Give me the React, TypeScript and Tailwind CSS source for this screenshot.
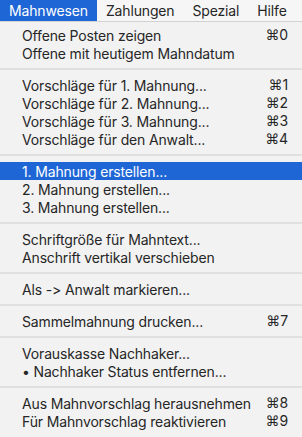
import React from 'react';

type Item = { label: string; shortcut?: string; active?: boolean } | 'sep';

const MENU_TITLES = ['Mahnwesen', 'Zahlungen', 'Spezial', 'Hilfe'];

const ITEMS: Item[] = [
  { label: 'Offene Posten zeigen', shortcut: '0' },
  { label: 'Offene mit heutigem Mahndatum' },
  'sep',
  { label: 'Vorschläge für 1. Mahnung...', shortcut: '1' },
  { label: 'Vorschläge für 2. Mahnung...', shortcut: '2' },
  { label: 'Vorschläge für 3. Mahnung...', shortcut: '3' },
  { label: 'Vorschläge für den Anwalt...', shortcut: '4' },
  'sep',
  { label: '1. Mahnung erstellen...', active: true },
  { label: '2. Mahnung erstellen...' },
  { label: '3. Mahnung erstellen...' },
  'sep',
  { label: 'Schriftgröße für Mahntext...' },
  { label: 'Anschrift vertikal verschieben' },
  'sep',
  { label: 'Als -> Anwalt markieren...' },
  'sep',
  { label: 'Sammelmahnung drucken...', shortcut: '7' },
  'sep',
  { label: 'Vorauskasse Nachhaker...' },
  { label: '• Nachhaker Status entfernen...' },
  'sep',
  { label: 'Aus Mahnvorschlag herausnehmen', shortcut: '8' },
  { label: 'Für Mahnvorschlag reaktivieren', shortcut: '9' },
];

export default function App() {
  return (
    <div
      className="w-[302px] h-[437px] overflow-hidden bg-[#f2f2f2] text-[14px] tracking-[-0.15px] text-[#262626]"
      style={{ fontFamily: 'Inter, "DejaVu Sans", sans-serif', fontFeatureSettings: '"calt" 0, "liga" 0' }}
    >
      {/* Menu bar */}
      <div className="flex h-[22px] bg-[#f6f6f6] border-b border-[#d2d2d2]">
        {MENU_TITLES.map((title, i) => (
          <div
            key={title}
            className={
              i === 0
                ? 'px-[9px] flex items-center bg-[#1e66d6] text-white'
                : 'px-[9px] flex items-center'
            }
          >
            {title}
          </div>
        ))}
      </div>

      {/* Dropdown */}
      <div className="pt-[4px] pb-[5px]">
        {ITEMS.map((item, i) =>
          item === 'sep' ? (
            <div key={i} className="h-[14px] flex items-center">
              <div className="w-full h-[2px] bg-[#e0e0e0]" />
            </div>
          ) : (
            <div
              key={i}
              className={
                item.active
                  ? 'h-[18px] flex items-center justify-between pl-[22px] pr-[14px] bg-[#1e66d6] text-white'
                  : 'h-[18px] flex items-center justify-between pl-[22px] pr-[14px]'
              }
            >
              <span className="whitespace-nowrap">{item.label}</span>
              {item.shortcut && (
                <span className="whitespace-nowrap">
                  <span style={{ fontFamily: '"DejaVu Sans", sans-serif' }}>⌘</span>
                  {item.shortcut}
                </span>
              )}
            </div>
          ),
        )}
      </div>
    </div>
  );
}
